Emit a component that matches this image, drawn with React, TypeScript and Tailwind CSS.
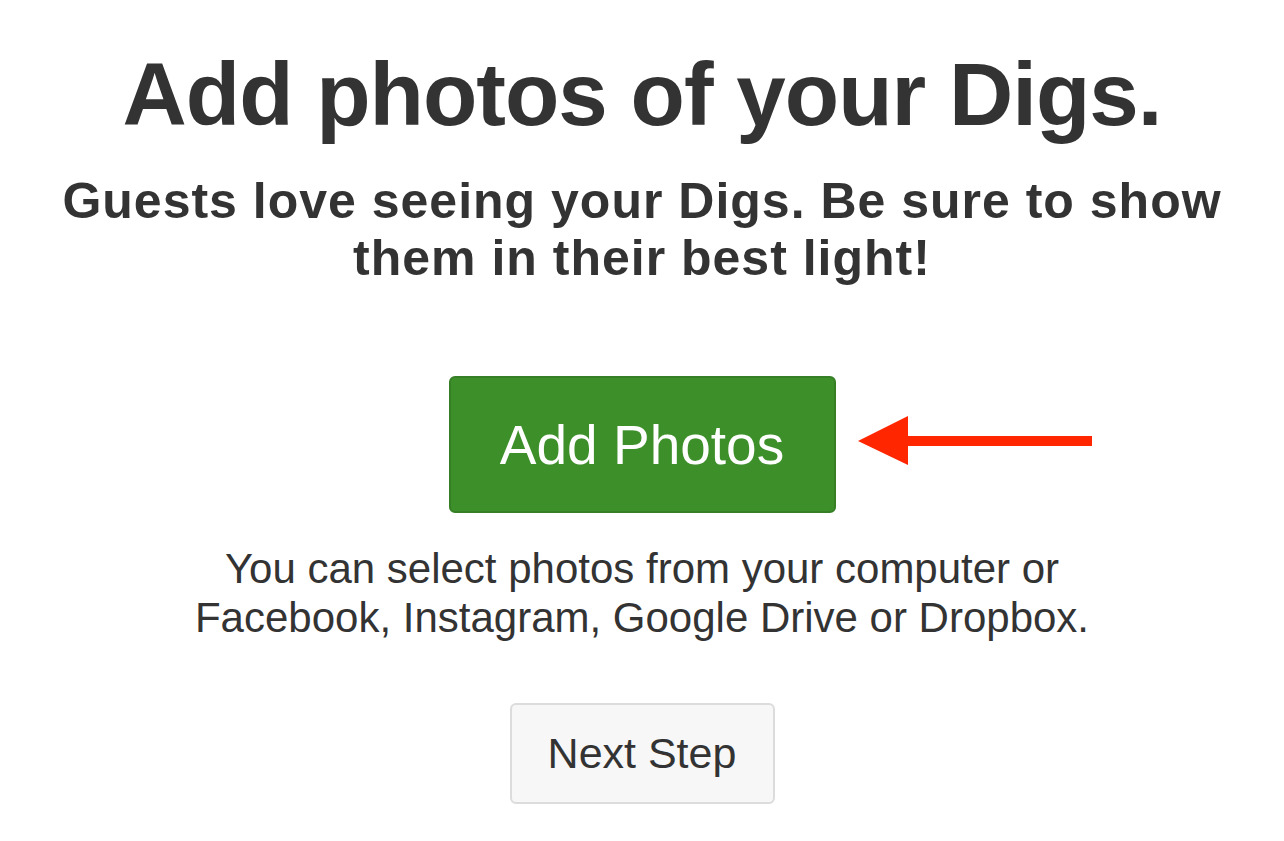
export default function App() {
  return (
    <div className="min-h-screen bg-white flex flex-col items-center text-[#333333]" style={{ fontFamily: '"Liberation Sans", Arial, sans-serif' }}>
      <h1 className="mt-[50px] text-[89px] leading-[89px] font-bold tracking-[-1px] text-center whitespace-nowrap">Add photos of your Digs.</h1>
      <p className="mt-[34px] text-[50px] leading-[57px] font-bold tracking-[1px] text-center w-[1240px]">
        Guests love seeing your Digs. Be sure to show<br />them in their best light!
      </p>
      <div className="relative mt-[89px]">
        <button className="w-[387px] h-[137px] rounded-[6px] bg-[#3d8f29] border-2 border-[#377f26] text-white text-[55px] leading-none pt-[2px]">Add Photos</button>
        <svg className="absolute left-full top-[40px] ml-[22px]" width="235" height="50" viewBox="0 0 235 50">
          <polygon points="0,25 50,0 50,49" fill="#ff2600" />
          <rect x="48" y="20" width="186" height="10" fill="#ff2600" />
        </svg>
      </div>
      <p className="mt-[31px] text-[42px] leading-[49px] text-center whitespace-nowrap">
        You can select photos from your computer or<br />Facebook, Instagram, Google Drive or Dropbox.
      </p>
      <button className="mt-[61px] w-[265px] h-[101px] rounded-[6px] bg-[#f7f7f7] border-2 border-[#dcdcdc] text-[43px] text-[#333333]">Next Step</button>
    </div>
  );
}
